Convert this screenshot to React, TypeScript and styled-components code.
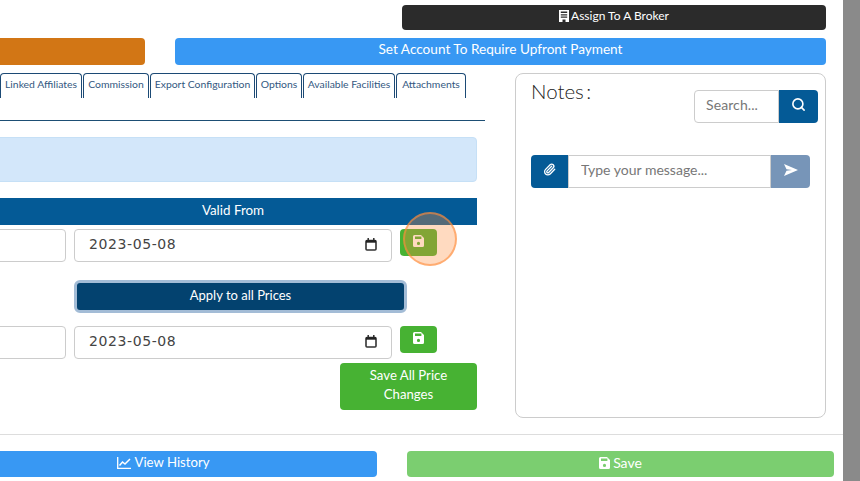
import React from "react";
import styled, { createGlobalStyle } from "styled-components";
import { Paperclip, Search } from "lucide-react";

const Global = createGlobalStyle`
  html, body { margin: 0; padding: 0; background: #8a8a8a; }
  * { box-sizing: border-box; }
  body { font-family: "Lato", "Open Sans", sans-serif; }
`;

const Page = styled.div`
  width: 860px;
  height: 481px;
  background: #8a8a8a;
  overflow: hidden;
`;
const Modal = styled.div`
  width: 843px;
  height: 481px;
  background: #fff;
  overflow: hidden;
  display: flex;
  flex-direction: column;
`;
const Shifted = styled.div`
  margin-left: -30px;
  display: flex;
  flex-direction: column;
`;
const Bar = styled.button<{ $bg: string; $fg?: string }>`
  border: 0;
  border-radius: 4px;
  background: ${(p) => p.$bg};
  color: ${(p) => p.$fg || "#fff"};
  font: 400 13.5px/1 "Lato", sans-serif;
  display: flex;
  align-items: center;
  justify-content: center;
  gap: 3px;
  padding: 0 0 4px;
`;
const TopRow = styled.div`
  display: flex;
  justify-content: flex-end;
  padding: 5px 17px 0 0;
`;
const Broker = styled(Bar)`
  width: 424px;
  height: 25px;
  font-size: 12px;
  gap: 2px;
`;
const ActionRow = styled.div`
  display: flex;
  gap: 30px;
  padding: 8px 17px 0 0;
`;
const Orange = styled(Bar)`
  width: 175px;
  height: 27px;
`;
const Upfront = styled(Bar)`
  width: 651px;
  height: 27px;
  font-size: 13.6px;
  padding-bottom: 3px;
`;
const Main = styled.div`
  display: flex;
  gap: 30px;
  padding: 8px 17px 0 0;
`;
const Left = styled.div`
  width: 515px;
  position: relative;
`;
const Tabs = styled.div`
  display: flex;
  gap: 1px;
  padding-left: 30px;
  border-bottom: 1px solid #1d4e74;
  height: 48px;
`;
const Tab = styled.div<{ $w: number }>`
  width: ${(p) => p.$w}px;
  height: 25px;
  border: 1px solid #1c4a75;
  border-bottom: 0;
  border-radius: 4px 4px 0 0;
  color: #33587f;
  font-size: 10.4px;
  padding-bottom: 5px;
  display: flex;
  align-items: center;
  justify-content: center;
  white-space: nowrap;
`;
const Inner = styled.div`
  padding-right: 8px;
`;
const Alert = styled.div`
  height: 45px;
  margin-top: 16px;
  border: 1px solid #c6e0f6;
  border-radius: 4px;
  background: #d3e7fa;
`;
const TableHead = styled.div`
  height: 27px;
  margin-top: 16px;
  padding-bottom: 3px;
  background: #045a96;
  color: #fff;
  font-size: 13.4px;
  display: grid;
  grid-template-columns: 104px 318px;
  align-items: center;
  & > span { grid-column: 2; text-align: center; }
`;
const PriceRow = styled.div`
  display: grid;
  grid-template-columns: 96px 318px 37px;
  gap: 8px;
  align-items: start;
`;
const FirstRow = styled(PriceRow)`
  margin-top: 4px;
`;
const SecondRow = styled(PriceRow)`
  margin-top: 13px;
`;
const Box = styled.div`
  height: 33px;
  width: 100%;
  border: 1px solid #ccc;
  border-radius: 4px;
  background: #fff;
`;
const DateBox = styled(Box)`
  display: flex;
  align-items: center;
  justify-content: space-between;
  padding: 0 14px 3px 14px;
  color: #444;
  font: 400 14px "DejaVu Sans", sans-serif;
  letter-spacing: 0.6px;
`;
const SaveIcon = styled(Bar)`
  width: 37px;
  height: 27px;
`;
const ApplyRow = styled.div`
  padding: 18px 0 0 104px;
`;
const Apply = styled(Bar)`
  width: 333px;
  height: 33px;
  font-size: 13px;
  border: 3px solid #a3bcd6;
  border-radius: 6px;
  padding-bottom: 3px;
`;
const SaveAllRow = styled.div`
  display: flex;
  justify-content: flex-end;
  margin-top: 4px;
`;
const SaveAll = styled(Bar)`
  width: 137px;
  height: 47px;
  font-size: 13.2px;
  line-height: 19px;
  text-align: center;
  padding-bottom: 4px;
`;
const Pulse = styled.div`
  position: absolute;
  left: 433px;
  top: 139px;
  width: 54px;
  height: 54px;
  border-radius: 50%;
  background: rgba(255, 140, 60, 0.32);
  border: 2px solid rgba(255, 140, 60, 0.6);
`;
const Notes = styled.div`
  width: 311px;
  height: 345px;
  border: 1px solid #ccc;
  border-radius: 8px;
  padding: 0 7px 0 15px;
`;
const NotesHead = styled.div`
  display: flex;
  justify-content: space-between;
  align-items: flex-start;
`;
const Title = styled.div`
  font-size: 20.5px;
  font-weight: 300;
  word-spacing: -3px;
  line-height: 1;
  color: #222;
  padding-top: 7px;
`;
const Group = styled.div`
  display: flex;
  height: 33px;
`;
const SearchGroup = styled(Group)`
  margin-top: 16px;
  width: 124px;
`;
const MessageGroup = styled(Group)`
  margin-top: 32px;
  width: 279px;
`;
const GroupInput = styled.input`
  flex: 1;
  min-width: 0;
  border: 1px solid #ccc;
  border-radius: 0;
  padding: 0 12px 4px;
  font: 400 14px "Lato", sans-serif;
  color: #555;
  &::placeholder { color: #777; opacity: 1; }
`;
const SearchInput = styled(GroupInput)`
  border-radius: 4px 0 0 4px;
  padding-left: 11px;
  letter-spacing: 0.1px;
`;
const Addon = styled(Bar)<{ $w: number; $r: string }>`
  width: ${(p) => p.$w}px;
  border-radius: ${(p) => p.$r};
  flex: none;
`;
const Divider = styled.div`
  height: 1px;
  background: #ddd;
  margin-top: 16px;
`;
const Footer = styled.div`
  display: flex;
  gap: 30px;
  margin-left: -20px;
  padding: 16px 9px 0 0;
`;
const History = styled(Bar)`
  width: 427px;
  height: 26px;
  font-size: 13.2px;
  padding-bottom: 2px;
`;
const SaveMain = styled(Bar)`
  width: 427px;
  height: 26px;
  font-size: 14px;
  padding-bottom: 2px;
`;

const FloppyIcon = () => (
  <svg width="11" height="12" viewBox="0 0 11 12">
    <path
      fillRule="evenodd"
      fill="#fff"
      d="M1.5 0H8L11 3V10.5A1.5 1.5 0 0 1 9.5 12H1.5A1.5 1.5 0 0 1 0 10.5V1.5A1.5 1.5 0 0 1 1.5 0ZM2 1.6V4H8.4V1.6ZM5.5 6.8A1.6 1.6 0 1 0 5.5 10A1.6 1.6 0 1 0 5.5 6.8Z"
    />
  </svg>
);
const BuildingIcon = () => (
  <svg width="10" height="12" viewBox="0 0 10 12">
    <path
      fillRule="evenodd"
      fill="#fff"
      d="M0 0H10V12H6.5V9.5H3.5V12H0ZM1.8 1.6V3H8.2V1.6ZM1.8 4.2V5.4H8.2V4.2ZM1.8 6.6V7.8H8.2V6.6Z"
    />
  </svg>
);
const ChartIcon = () => (
  <svg width="14" height="12" viewBox="0 0 14 12" fill="none" stroke="#fff">
    <path d="M.7 0V11.3H14" strokeWidth="1.3" />
    <path d="M2.5 8.5L5.5 5L8 7L13 2" strokeWidth="1.5" />
  </svg>
);
const SendIcon = () => (
  <svg width="14" height="12" viewBox="0 0 14 12">
    <path d="M0 0L14 6L0 12L2.5 6.8L8 6L2.5 5.2Z" fill="#fff" />
  </svg>
);
const CalendarIcon = () => (
  <svg width="12" height="13" viewBox="0 0 12 13" fill="none">
    <rect x="1" y="2.5" width="10" height="9.5" rx="1" stroke="#333" strokeWidth="1.6" />
    <path d="M1 3.5H11" stroke="#222" strokeWidth="2.4" />
    <path d="M3.2 0V2M8.8 0V2" stroke="#222" strokeWidth="1.4" />
  </svg>
);

const tabs: [string, number][] = [
  ["Linked Affiliates", 82],
  ["Commission", 66],
  ["Export Configuration", 105],
  ["Options", 46],
  ["Available Facilities", 92],
  ["Attachments", 70],
];

const PriceCells = () => (
  <>
    <Box />
    <DateBox>
      2023-05-08
      <CalendarIcon />
    </DateBox>
    <SaveIcon $bg="#47b233"><FloppyIcon /></SaveIcon>
  </>
);

export default function App() {
  return (
    <Page>
      <Global />
      <Modal>
        <Shifted>
          <TopRow>
            <Broker $bg="#2b2b2b"><BuildingIcon /> Assign To A Broker</Broker>
          </TopRow>
          <ActionRow>
            <Orange $bg="#d27615" />
            <Upfront $bg="#3898f3">Set Account To Require Upfront Payment</Upfront>
          </ActionRow>
          <Main>
            <Left>
              <Tabs>
                {tabs.map(([t, w]) => (
                  <Tab key={t} $w={w}>{t}</Tab>
                ))}
              </Tabs>
              <Inner>
                <Alert />
                <TableHead><span>Valid From</span></TableHead>
                <FirstRow><PriceCells /></FirstRow>
                <ApplyRow>
                  <Apply $bg="#03426f">Apply to all Prices</Apply>
                </ApplyRow>
                <SecondRow><PriceCells /></SecondRow>
                <SaveAllRow>
                  <SaveAll $bg="#47b233">Save All Price<br />Changes</SaveAll>
                </SaveAllRow>
              </Inner>
              <Pulse />
            </Left>
            <Notes>
              <NotesHead>
                <Title>Notes :</Title>
                <SearchGroup>
                  <SearchInput placeholder="Search..." />
                  <Addon $bg="#045a96" $w={39} $r="0 4px 4px 0"><Search size={15} strokeWidth={2.6} /></Addon>
                </SearchGroup>
              </NotesHead>
              <MessageGroup>
                <Addon $bg="#045a96" $w={37} $r="4px 0 0 4px"><Paperclip size={13} strokeWidth={2.4} /></Addon>
                <GroupInput placeholder="Type your message..." />
                <Addon $bg="#7795b8" $w={39} $r="0 4px 4px 0"><SendIcon /></Addon>
              </MessageGroup>
            </Notes>
          </Main>
        </Shifted>
        <Divider />
        <Shifted>
          <Footer>
            <History $bg="#3898f3"><ChartIcon /> View History</History>
            <SaveMain $bg="#7bce70"><FloppyIcon /> Save</SaveMain>
          </Footer>
        </Shifted>
      </Modal>
    </Page>
  );
}
